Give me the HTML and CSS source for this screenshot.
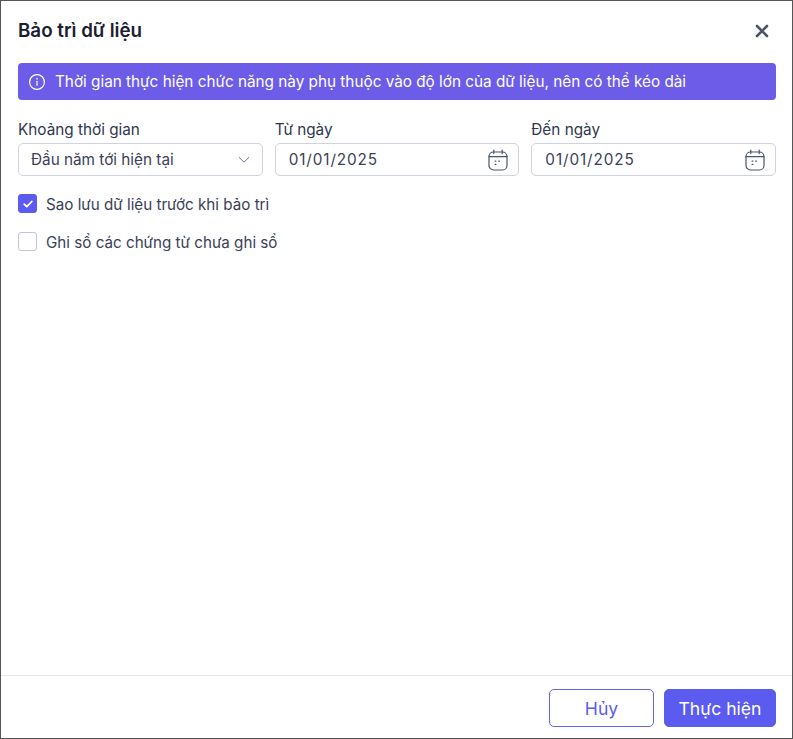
FILE: index.html
```html
<!DOCTYPE html>
<html lang="vi">
<head>
<meta charset="utf-8">
<title>Bảo trì dữ liệu</title>
<link rel="stylesheet" href="styles.css">
</head>
<body>
<div class="dialog">
  <header class="head">
    <h1 class="title">Bảo trì dữ liệu</h1>
    <svg class="close" width="14" height="14" viewBox="0 0 14 14"><path d="M2 2l10 10M12 2L2 12" fill="none" stroke="#4b5563" stroke-width="2.6" stroke-linecap="round"/></svg>
  </header>
  <main class="body">
    <div class="notice">
      <svg width="18" height="18" viewBox="0 0 18 18" fill="none" stroke="#fff" stroke-width="1.2"><circle cx="9" cy="9" r="7.4"/><path d="M9 8.3v4" stroke-linecap="round"/><path d="M9 5.4v.6" stroke-width="1.4" stroke-linecap="round"/></svg>
      <span>Thời gian thực hiện chức năng này phụ thuộc vào độ lớn của dữ liệu, nên có thể kéo dài</span>
    </div>
    <div class="fields">
      <div class="field">
        <label class="label">Khoảng thời gian</label>
        <div class="input select">
          <span class="value">Đầu năm tới hiện tại</span>
          <svg width="12" height="8" viewBox="0 0 12 8"><path d="M1.2 1.5L6 6.2l4.8-4.7" fill="none" stroke="#6b7280" stroke-width="1" stroke-linecap="round" stroke-linejoin="round"/></svg>
        </div>
      </div>
      <div class="field">
        <label class="label">Từ ngày</label>
        <div class="input">
          <span class="value date">01/01/2025</span>
          <svg class="cal" width="20" height="22" viewBox="0 0 20 22" fill="none" stroke="#4b5470" stroke-width="1.2" stroke-linecap="round"><rect x="1" y="3" width="18" height="18" rx="4.5"/><path d="M1 7.6h18M5.8 1v3.6M14.2 1v3.6"/><path d="M7.2 12.2h.6M10.8 12.2h.6M7.2 15.4h.6" stroke-width="1.3"/></svg>
        </div>
      </div>
      <div class="field">
        <label class="label">Đến ngày</label>
        <div class="input">
          <span class="value date">01/01/2025</span>
          <svg class="cal" width="20" height="22" viewBox="0 0 20 22" fill="none" stroke="#4b5470" stroke-width="1.2" stroke-linecap="round"><rect x="1" y="3" width="18" height="18" rx="4.5"/><path d="M1 7.6h18M5.8 1v3.6M14.2 1v3.6"/><path d="M7.2 12.2h.6M10.8 12.2h.6M7.2 15.4h.6" stroke-width="1.3"/></svg>
        </div>
      </div>
    </div>
    <div class="checks">
      <div class="check">
        <span class="box on"><svg width="12" height="10" viewBox="0 0 12 10"><path d="M2.2 5.2l2.6 2.5 5-5.2" fill="none" stroke="#fff" stroke-width="1.8" stroke-linecap="round" stroke-linejoin="round"/></svg></span>
        <span class="check-text">Sao lưu dữ liệu trước khi bảo trì</span>
      </div>
      <div class="check">
        <span class="box"></span>
        <span class="check-text">Ghi sổ các chứng từ chưa ghi sổ</span>
      </div>
    </div>
  </main>
  <footer class="foot">
    <button class="btn ghost" type="button">Hủy</button>
    <button class="btn primary" type="button">Thực hiện</button>
  </footer>
</div>
</body>
</html>
```
FILE: styles.css
```css
* { box-sizing: border-box; }
html, body { margin: 0; height: 100%; }
body { font-family: Inter, "Noto Sans", sans-serif; color: #2f3650; background: #fff; }
.dialog { width: 793px; height: 739px; border: 1px solid #555; display: flex; flex-direction: column; background: #fff; }
.head { display: flex; justify-content: space-between; padding: 18px 23px 0 17px; height: 62px; flex: none; align-items: flex-start; }
.title { margin: 0; font-size: 18.75px; line-height: 24px; font-weight: 600; color: #1a2030; }
.close { margin-top: 5px; }
.body { flex: 1; padding: 0 16px 0 17px; display: flex; flex-direction: column; }
.notice { height: 37px; background: #6c5ce7; border-radius: 4px; color: #fff; display: flex; align-items: center; gap: 9px; padding: 0 10px; font-size: 15.3px; }
.fields { display: grid; grid-template-columns: repeat(3, 1fr); gap: 12px; margin-top: 19px; }
.label { display: block; font-size: 15.3px; line-height: 22px; height: 24px; color: #2f3650; font-weight: 400; }
.input { height: 33px; border: 1px solid #cfd3e0; border-radius: 5px; display: flex; align-items: center; justify-content: space-between; padding: 0 12px 0 13px; }
.select { padding-left: 12px; }
.value { font-size: 15.3px; color: #3a4158; }
.date { letter-spacing: 0.9px; }
.cal { margin-right: -2px; }
.checks { display: flex; flex-direction: column; gap: 19px; margin-top: 18px; }
.check { display: flex; align-items: center; gap: 9px; height: 19px; font-size: 15.2px; line-height: 19px; color: #3a4158; }
.check-text { padding-top: 2px; }
.box { width: 19px; height: 19px; border: 1.5px solid #c0c3dc; border-radius: 3px; display: flex; align-items: center; justify-content: center; flex: none; }
.box.on { background: #5b5bf0; border-color: #5b5bf0; }
.foot { height: 63px; border-top: 1px solid #e8e8ec; display: flex; justify-content: flex-end; gap: 10px; padding: 13px 16px 0 0; flex: none; }
.btn { width: 105px; height: 38px; border-radius: 5px; font-family: inherit; font-size: 17.6px; font-weight: 400; }
.ghost { background: #fff; border: 1px solid #6366f1; color: #5b5bf0; }
.primary { background: #5b5bf0; border: 1px solid #5b5bf0; color: #fff; width: 112px; }
```
